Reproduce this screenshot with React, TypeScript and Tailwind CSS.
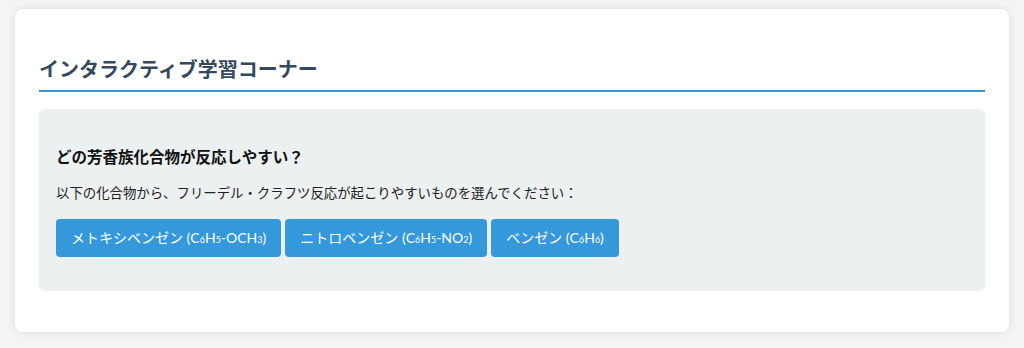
const options = [
  { name: 'メトキシベンゼン', base: ['C', '6', 'H', '5', '-OCH', '3'] },
  { name: 'ニトロベンゼン', base: ['C', '6', 'H', '5', '-NO', '2'] },
  { name: 'ベンゼン', base: ['C', '6', 'H', '6'] },
]

function Formula({ parts }: { parts: string[] }) {
  return (
    <>
      {parts.map((p, i) =>
        i % 2 === 1 ? (
          <sub key={i} className="text-[9px] align-baseline bottom-0">
            {p}
          </sub>
        ) : (
          <span key={i}>{p}</span>
        )
      )}
    </>
  )
}

export default function App() {
  return (
    <div
      className="min-h-[348px] bg-[#f4f4f4] pt-[9px] px-[15px]"
      style={{ fontFamily: 'Lato, "Noto Sans CJK JP", sans-serif' }}
    >
      <div className="bg-white rounded-lg shadow-[0_0_10px_rgba(0,0,0,0.1)] px-6 pt-[46px] pb-[41px]">
        {/* Title */}
        <h2 className="text-[20px] leading-[28px] font-bold text-[#34495e] pb-[7px] border-b-2 border-[#3498db]">
          インタラクティブ学習コーナー
        </h2>

        {/* Quiz box */}
        <div className="mt-[17px] bg-[#ecf0f1] rounded-md px-[17px] pt-[36px] pb-[34px]">
          <h3 className="text-[15.5px] leading-6 font-bold text-[#111]">どの芳香族化合物が反応しやすい？</h3>
          <p className="mt-[14px] text-[13.4px] leading-[21px] text-[#222]">
            以下の化合物から、フリーデル・クラフツ反応が起こりやすいものを選んでください：
          </p>
          <div className="mt-[15px] flex gap-1">
            {options.map((o) => (
              <button
                key={o.name}
                className="h-[38px] px-[15px] rounded bg-[#3498db] text-white text-sm"
              >
                {o.name} (<Formula parts={o.base} />)
              </button>
            ))}
          </div>
        </div>
      </div>
    </div>
  )
}
